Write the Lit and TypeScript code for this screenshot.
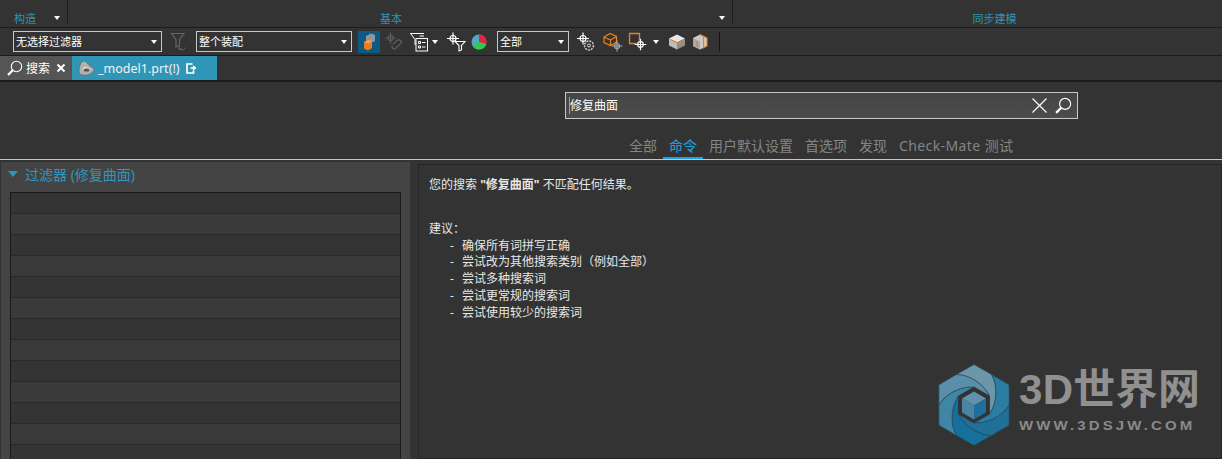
import { LitElement, css, html, svg } from 'lit';
import { customElement } from 'lit/decorators.js';

const crosshair = (x: number, y: number, r: number, c = '#fff') => svg`
  <circle cx=${x} cy=${y} r=${r} fill="none" stroke=${c} stroke-width="1.2"/>
  <path d="M${x - r - 3} ${y}H${x + r + 3}M${x} ${y - r - 3}V${y + r + 3}" stroke=${c} stroke-width="1.2"/>`;

const funnel = (c: string) => svg`<path d="M1.5 1.5H14L9.5 7.5V13L6 15V7.5Z" fill="none" stroke=${c} stroke-width="1.2"/>`;

const icons = {
  filterOff: html`<svg width="18" height="20" viewBox="0 0 18 20">${funnel('#666')}<path d="M9 16.5c2 2 5 2 6.5-1M9 14v3h3" fill="none" stroke="#666"/></svg>`,
  active: html`<svg width="22" height="22" viewBox="0 0 22 22">
    <path d="M8 5l5-2.500 4 1.500v6l-5 2.500-4-2z" fill="#8f979c"/>
    <path d="M6 11l5-2 3 1.500v6.500l-4 2.500-4-2z" fill="#ee7a1f"/>
    <path d="M6 11l5-2 3 1.500-4 2z" fill="#f6a35f"/></svg>`,
  link: html`<svg width="18" height="20" viewBox="0 0 18 20">${crosshair(5.5, 6, 2.5, '#5c5c5c')}
    <path d="M8 12l4-3.500c3-2 5.500 1 3.500 3L11 16c-2 2-5 0-3.500-2.500" fill="none" stroke="#5c5c5c" stroke-width="1.300"/></svg>`,
  list: html`<svg width="18" height="20" viewBox="0 0 18 20">
    <path d="M.5 1.500H14M.5 1.500L5 7.500V13" fill="none" stroke="#fff"/>
    <path d="M9.500 4H14" stroke="#fff"/>
    <rect x="6" y="6.500" width="11.500" height="12.500" fill="#333" stroke="#fff"/>
    <path d="M8.500 9.500h2v2h-2zM8.500 14h2v2h-2zM12 10.500h3.500M12 15h3.500" fill="none" stroke="#fff"/></svg>`,
  crossFilter: html`<svg width="20" height="20" viewBox="0 0 20 20">${crosshair(7, 6.500, 3)}
    <path d="M9 9.500H19L15.500 13.500V18L13 19V13.500Z" fill="#333" stroke="#fff" stroke-width="1.100"/></svg>`,
  pie: html`<svg width="16" height="16" viewBox="0 0 16 16">
    <circle cx="8" cy="8" r="7.500" fill="#57a5c4"/>
    <path d="M8 8V.5A7.500 7.500 0 0 1 15.200 10.200Z" fill="#e8243c"/>
    <path d="M8 8L15.200 10.200A7.500 7.500 0 0 1 1.500 11.800Z" fill="#2fc94f"/></svg>`,
  crossGear: html`<svg width="18" height="20" viewBox="0 0 18 20">${crosshair(6, 6.500, 3)}
    <circle cx="12" cy="13.500" r="4.500" fill="#333" stroke="#ccc" stroke-width="1.500" stroke-dasharray="2 1"/>
    <circle cx="12" cy="13.500" r="1.500" fill="none" stroke="#ddd"/></svg>`,
  boxCross: html`<svg width="20" height="20" viewBox="0 0 20 20">
    <path d="M1 5l6-3.500 6.500 3v5.500L7.500 13.500 1 10.500zM1 5l6.500 3 6-3.500M7.500 8v5.500" fill="none" stroke="#ee7f1a" stroke-width="1.200"/>
    ${crosshair(14, 14, 2.500, '#a8a8a8')}</svg>`,
  squareCross: html`<svg width="20" height="20" viewBox="0 0 20 20">
    <path d="M1.500 1.500H11.500V11.500H1.500Z" fill="none" stroke="#ee7f1a" stroke-width="1.300"/>
    <circle cx="12.500" cy="12.500" r="4" fill="#333"/>
    ${crosshair(12.500, 12.500, 2.800)}</svg>`,
  solidA: html`<svg width="18" height="18" viewBox="0 0 18 18">
    <path d="M1 5.500L9 1.500l8 4-8 4z" fill="#e8e8e8"/><path d="M1 5.500l8 4v7l-8-4z" fill="#bdbdbd"/><path d="M17 5.500l-8 4v7l8-4z" fill="#8f8f8f"/>
    <path d="M3.500 7L14 12" stroke="#ee7f1a" stroke-width="1.200"/></svg>`,
  solidB: html`<svg width="16" height="18" viewBox="0 0 16 18">
    <path d="M1 5l7-3.500L15 5v8l-7 3.500L1 13z" fill="#c9c9c9"/><path d="M1 5l7 3.500V16.500L1 13z" fill="#a9a9a9"/>
    <path d="M8 1.500L15 5v8l-3.500 1.800V4M5 8v6" fill="none" stroke="#ee7f1a" stroke-width="1.100"/></svg>`,
  part: html`<svg width="17" height="17" viewBox="0 0 17 17">
    <path d="M1 12C1 6 3 1 6 1c2.500 0 3.500 4 10 7.500 1 2-3 6-6.500 6.500C6 15.500 1 15 1 12z" fill="#b0b0b0" stroke="#666" stroke-width=".8"/>
    <path d="M4 10c1-3 3-4 4-3.500 2 1.500 4 2 5 2.500-1 2-6 3-9 1z" fill="#d8d8d8"/>
    <ellipse cx="8.500" cy="10" rx="3" ry="1.600" fill="#555"/></svg>`,
  close: html`<svg width="10" height="10" viewBox="0 0 10 10"><path d="M1.500 1.500l7 7M8.500 1.500l-7 7" stroke="#fff" stroke-width="2"/></svg>`,
  page: html`<svg width="10" height="11" viewBox="0 0 10 11"><path d="M6.500 1H1V10H7.500V7.500" fill="none" stroke="#fff" stroke-width="1.700"/><path d="M4.500 5h4.500M7 3l2.500 2-2.500 2" fill="none" stroke="#fff" stroke-width="1.300"/></svg>`,
};

const glass = (size: number) => html`<svg width=${size} height=${size} viewBox="0 0 17 17">
  <circle cx="10.500" cy="6.500" r="5.200" fill="none" stroke="#fff" stroke-width="1.100"/>
  <path d="M6.800 10.200L2 15" stroke="#fff" stroke-width="2.200"/></svg>`;

const blades = ['#6d96a9', '#2b7da4', '#1f7199', '#16709c', '#3f85a6', '#5b8fa9'];

@customElement('app-root')
export class AppRoot extends LitElement {
  static styles = css`
    :host {
      display: block;
      width: 1222px;
      height: 459px;
      overflow: hidden;
      position: relative;
      background: #333;
      color: #eee;
      font: 12px/17px "Noto Sans", "Noto Sans CJK SC", sans-serif;
    }
    svg { display: block; flex: none; }

    .ribbon { display: flex; height: 27px; border-bottom: 1px solid #1b1b1b; }
    .group { position: relative; display: flex; align-items: flex-end; justify-content: center; height: 23px; color: #2f93b6; font-size: 11px; line-height: 15px; }
    .group + .group { border-left: 1px solid #1b1b1b; }
    .g1 { width: 67px; padding-right: 17px; box-sizing: border-box; }
    .g2 { width: 665px; box-sizing: border-box; padding-right: 18px; }
    .g3 { flex: 1; padding-left: 34px; }
    .group span { margin-bottom: -3px; }
    .caret { width: 0; height: 0; border: 3px solid transparent; border-top: 4px solid #fff; border-bottom: 0; flex: none; }
    .group .caret { position: absolute; right: 7px; bottom: 3px; }

    .toolbar { display: flex; align-items: center; height: 27px; padding-left: 13px; border-bottom: 1px solid #1b1b1b; }
    .select { display: flex; align-items: center; justify-content: space-between; box-sizing: border-box; height: 21px; padding: 0 4px 0 2px; border: 1px solid #c8c8c8; color: #fff; font-size: 11px; }
    .select .caret { border-width: 3.500px; border-top-width: 4px; border-bottom: 0; }
    .s1 { width: 149px; }
    .s2 { width: 156px; margin-left: 8px; }
    .s3 { width: 72px; margin-left: 10px; }
    .btn { display: flex; align-items: center; justify-content: center; flex: none; }
    .ml8 { margin-left: 8px; }
    .on { width: 22px; height: 22px; margin-left: 6px; background: #0f5a82; }
    .vsep { width: 1px; height: 20px; margin-left: 11px; background: #151515; }

    .tabs { display: flex; height: 24px; border-bottom: 2px solid #1b1b1b; }
    .tab { display: flex; align-items: center; box-sizing: border-box; height: 24px; }
    .tab-search { width: 72px; padding-left: 6px; background: #555; color: #fff; font-size: 12px; }
    .tab-search span { margin: 0 6px 0 3px; }
    .tab-model { width: 145px; padding-left: 6px; background: #3096b8; color: #fff; font-size: 12.500px; }
    .tab-model span { margin: 0 6px 0 3px; color: #f2f2f2; }

    .head { height: 78px; box-sizing: border-box; padding-top: 10px; border-bottom: 1px solid #c6c6c6; }
    .searchbox { display: flex; align-items: center; box-sizing: border-box; width: 513px; height: 27px; margin-left: 565px; padding: 0 5px 0 3px; border: 1px solid #c8c8c8; background: linear-gradient(#454545, #4c4c4c); color: #fff; }
    .searchbox .q { flex: 1; border-left: 1px solid #7aa6d8; line-height: 17px; }
    .searchbox .x { margin-right: 6px; }
    .kinds { display: flex; margin: 17px 0 0 623px; font-size: 14px; line-height: 20px; color: #858585; }
    .kind { padding: 0 6px 1px; }
    .kind.cur { color: #1ea3e2; box-shadow: 0 2px 0 #1ea3e2; }
    .kind.latin { letter-spacing: .4px; }

    .body { display: flex; height: 299px; }
    .left { width: 409px; margin: 2px 0 0 1px; padding: 0 9px; box-sizing: border-box; background: #444; }
    .title { display: flex; align-items: center; gap: 7px; height: 24px; margin-left: -2px; color: #2f97ba; font-size: 14px; }
    .tri { width: 0; height: 0; border: 5px solid transparent; border-top: 6px solid #2f97ba; border-bottom: 0; }
    .table { box-sizing: border-box; width: 391px; height: 400px; margin-top: 6px; border: 1px solid #1a1a1a; }
    .row { height: 21px; box-sizing: border-box; border-bottom: 1px solid #2a2a2a; background: #343434; }
    .row:nth-child(even) { background: #3a3a3a; }
    .right { flex: 1; margin: 4px 0 0 8px; padding: 12px 10px; border: 1px solid #262626; color: #e8e8e8; font-size: 12px; line-height: 16.800px; }
    .right p { margin: 0; }
    .right .gap { margin-top: 27px; }
    .right li { display: flex; list-style: none; padding-left: 21px; }
    .right li i { width: 12px; font-style: normal; }
    .right ul { margin: 0; padding: 0; }

    .mark { position: absolute; left: 938px; top: 364px; display: flex; gap: 9px; }
    .brand { font: bold 42px/50px "Liberation Sans", "Noto Sans CJK SC", sans-serif; color: #909090; letter-spacing: .3px; margin-top: 1px; }
    .url { font: bold 12.500px/14px "Liberation Sans", sans-serif; color: #8a8a8a; letter-spacing: 2.600px; margin-top: 4px; transform: scaleX(1.2); transform-origin: left; white-space: nowrap; }
  `;

  private rows = Array.from({ length: 14 });

  render() {
    return html`
      <div class="ribbon">
        <div class="group g1"><span>构造</span><i class="caret"></i></div>
        <div class="group g2"><span>基本</span><i class="caret"></i></div>
        <div class="group g3"><span>同步建模</span></div>
      </div>
      <div class="toolbar">
        <div class="select s1">无选择过滤器<i class="caret"></i></div>
        <div class="btn ml8">${icons.filterOff}</div>
        <div class="select s2">整个装配<i class="caret"></i></div>
        <div class="btn on">${icons.active}</div>
        <div class="btn" style="margin-left:5px">${icons.link}</div>
        <div class="btn" style="margin-left:7px">${icons.list}</div>
        <i class="caret" style="margin-left:4px"></i>
        <div class="btn" style="margin-left:8px">${icons.crossFilter}</div>
        <div class="btn" style="margin-left:5px">${icons.pie}</div>
        <div class="select s3">全部<i class="caret"></i></div>
        <div class="btn ml8">${icons.crossGear}</div>
        <div class="btn ml8">${icons.boxCross}</div>
        <div class="btn" style="margin-left:5px">${icons.squareCross}</div>
        <i class="caret" style="margin-left:5px"></i>
        <div class="btn" style="margin-left:9px">${icons.solidA}</div>
        <div class="btn" style="margin-left:6px">${icons.solidB}</div>
        <div class="vsep"></div>
      </div>
      <div class="tabs">
        <div class="tab tab-search">${glass(17)}<span>搜索</span>${icons.close}</div>
        <div class="tab tab-model">${icons.part}<span>_model1.prt(!)</span>${icons.page}</div>
      </div>
      <div class="head">
        <div class="searchbox">
          <div class="q">修复曲面</div>
          <svg class="x" width="17" height="17" viewBox="0 0 17 17"><path d="M1.500 1.500l14 14M15.500 1.500l-14 14" stroke="#fff" stroke-width="1.200"/></svg>
          ${glass(18)}
        </div>
        <div class="kinds">
          <div class="kind">全部</div>
          <div class="kind cur">命令</div>
          <div class="kind">用户默认设置</div>
          <div class="kind">首选项</div>
          <div class="kind">发现</div>
          <div class="kind latin">Check-Mate 测试</div>
        </div>
      </div>
      <div class="body">
        <div class="left">
          <div class="title"><i class="tri"></i>过滤器 (修复曲面)</div>
          <div class="table">${this.rows.map(() => html`<div class="row"></div>`)}</div>
        </div>
        <div class="right">
          <p>您的搜索 <b>"修复曲面"</b> 不匹配任何结果。</p>
          <p class="gap">建议：</p>
          <ul>
            <li><i>-</i>确保所有词拼写正确</li>
            <li><i>-</i>尝试改为其他搜索类别（例如全部）</li>
            <li><i>-</i>尝试多种搜索词</li>
            <li><i>-</i>尝试更常规的搜索词</li>
            <li><i>-</i>尝试使用较少的搜索词</li>
          </ul>
        </div>
      </div>
      <div class="mark">
        <svg width="72" height="82" viewBox="0 0 72 81">
          ${blades.map((c, i) => svg`<path transform="rotate(${i * 60} 36 40.500)" fill=${c} stroke="#28485a" stroke-width=".6"
            d="M18.500 10L36 0L53.500 10C60.400 21.800 58.750 38.900 51.600 49.500L51.600 31.500C46 20 32 10 18.500 10Z"/>`)}
          <path d="M36 22.500L51.600 31.500V49.500L36 58.500 20.400 49.500V31.500Z" fill="#333"/>
          <path d="M36 27L48 34 36 41 24 34Z" fill="#5f93ad"/>
          <path d="M24 34L36 41V55L24 48Z" fill="#4a85a4"/>
          <path d="M48 34L36 41V55L48 48Z" fill="#206f9b"/>
        </svg>
        <div>
          <div class="brand">3D世界网</div>
          <div class="url">WWW.3DSJW.COM</div>
        </div>
      </div>
    `;
  }
}
